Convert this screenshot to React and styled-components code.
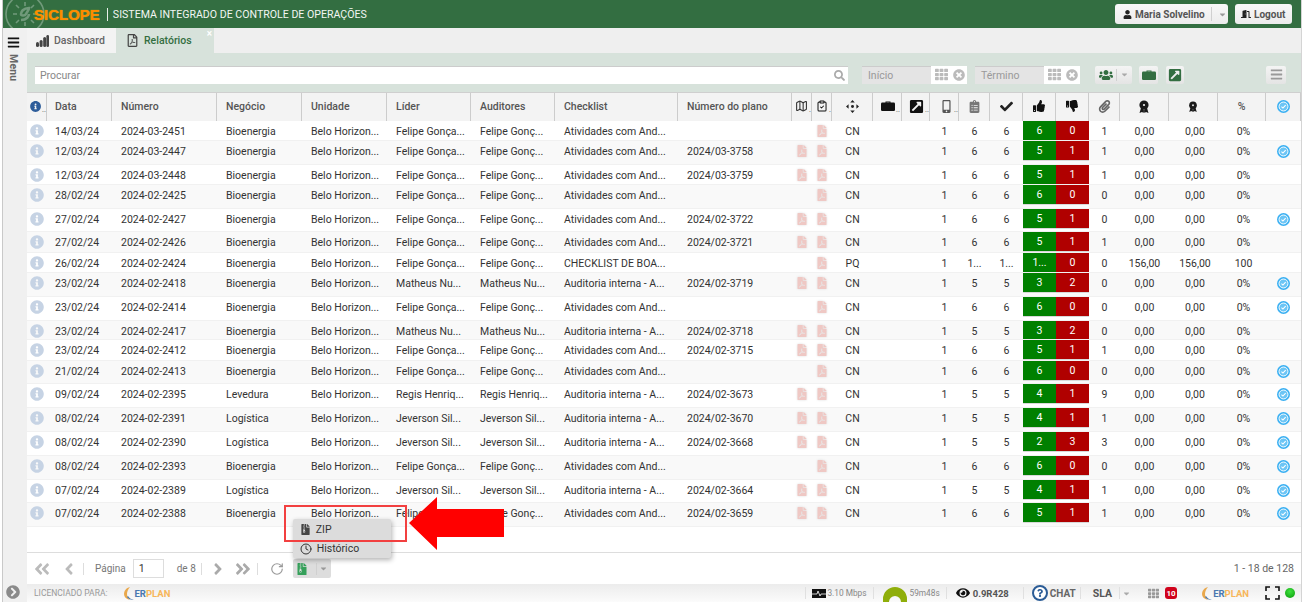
import React from "react";
import styled, { createGlobalStyle } from "styled-components";
import {
  FaThumbsUp, FaThumbsDown, FaCheck, FaUser, FaInfoCircle, FaFilePdf, FaRegFilePdf,
  FaUsers, FaEye, FaAngleDoubleLeft, FaAngleDoubleRight, FaAngleLeft, FaAngleRight,
  FaSearch, FaTh, FaTimesCircle, FaBars, FaExternalLinkSquareAlt, FaPaperclip, FaClipboardList,
  FaMobileAlt, FaFileArchive, FaChevronCircleRight, FaCaretDown, FaQuestion, FaDoorOpen,
} from "react-icons/fa";
import { Map as MapIcon, ClipboardCheck, RotateCw, Clock } from "lucide-react";

const Global = createGlobalStyle`
  html, body { margin: 0; padding: 0; background: #fff; overflow: hidden; }
  * { box-sizing: border-box; }
  body { font-family: Roboto, "Liberation Sans", sans-serif; }
`;

const COLS = "20px 65px 105px 85px 85px 84px 84px 123px 114px 20px 20px 41px 29px 28px 29px 31px 33px 33px 33px 31px 49px 49px 48px 1fr";

const Page = styled.div`position: relative; width: 1305px; height: 607px; overflow: hidden;`;
const Frame = styled.div`
  width: 1300px; height: 602px; margin-left: 2px; display: flex; flex-direction: column;
  border-left: 1px solid #c9c9c9; border-right: 1px solid #d4d4d4;
`;
const Header = styled.header`
  position: relative; height: 28px; flex: none; background: #336e41; display: flex; align-items: center;
  padding: 0 9px 0 31px; color: #fff; overflow: hidden;
`;
const LogoRing = styled.svg`position: absolute; left: 0; top: -8px; width: 44px; height: 44px;`;
const Brand = styled.span`
  font: bold 15px "Liberation Sans", sans-serif; color: #ff8a00; text-shadow: 0 0 1px #e8c400; position: relative;
`;
const BrandSep = styled.span`width: 1px; height: 13px; background: #e8efe9; margin: 0 5px 0 7px;`;
const Title = styled.span`font-size: 10.6px; color: #f2f6f3; flex: 1; white-space: nowrap;`;
const HeadBtn = styled.div`
  height: 20px; width: ${p => p.$w}px; flex: none; margin-left: ${p => p.$ml || 0}px; background: linear-gradient(#f8f8f8, #ececec);
  border-radius: 3px; display: flex; align-items: center; padding-left: ${p => p.$pl}px; color: #555; font-weight: 700; font-size: 10px; gap: 3px;
  white-space: nowrap;
`;
const BtnSep = styled.span`
  width: 1px; height: ${p => p.$h || 14}px; background: #d0d0d0; flex: none;
  margin-left: ${p => p.$l ?? 3}px; margin-right: ${p => p.$r ?? 3}px;
`;

const Body = styled.div`flex: 1; display: flex; min-height: 0;`;
const Sidebar = styled.aside`
  width: 24px; flex: none; background: #f0f0f0; display: flex; flex-direction: column; align-items: center;
  padding: 8px 4px 3px 0; color: #111;
`;
const MenuLabel = styled.div`
  writing-mode: vertical-rl; font-size: 10.5px; font-weight: 700; color: #666; margin-top: 5px; flex: 1; letter-spacing: .2px;
`;
const Main = styled.main`flex: 1; min-width: 0; display: flex; flex-direction: column;`;

const Tabs = styled.nav`height: 25px; flex: none; background: #efefef; display: flex;`;
const Tab = styled.div`
  position: relative; width: ${p => p.$w}px; display: flex; align-items: center; gap: 5px; padding-left: ${p => p.$pl}px;
  font-size: 10.5px; font-weight: 500; color: ${p => (p.$active ? "#336e41" : "#666")};
  background: ${p => (p.$active ? "#d7e2db" : "#f3f3f3")};
`;
const TabClose = styled.span`position: absolute; right: 2px; top: 0; color: #fff; font-size: 10px; line-height: 12px;`;
const BarsIcon = styled.svg`width: 13px; height: 12px; flex: none;`;

const Toolbar = styled.div`
  height: 40px; flex: none; background: #d7e2db; display: flex; align-items: center; padding: 4px 0 0 8px;
  border-bottom: 1px solid #cfcfcf;
`;
const Search = styled.div`
  width: 813px; height: 18px; background: #fff; border-top: 1px solid #ccc; display: flex; align-items: center;
  padding: 0 3px 0 5px; color: #888; font-size: 10.5px; justify-content: space-between;
`;
const DateField = styled.div`
  width: ${p => p.$w}px; height: 18px; margin-left: ${p => p.$ml}px; display: flex; background: #fff;
  color: #999; font-size: 10.5px;
`;
const DateLabel = styled.div`
  width: 69px; background: #e4e4e4; border-top: 1px solid #ccc; padding-left: 6px; display: flex; align-items: center;
`;
const DateIcons = styled.div`flex: 1; display: flex; align-items: center; justify-content: space-between; padding: 0 2px 0 4px; color: #bbb;`;
const ToolBtn = styled.div`
  width: ${p => p.$w}px; height: 18px; margin-left: ${p => p.$ml}px; background: linear-gradient(#f4f4f4, #e4e4e4);
  display: flex; align-items: center; justify-content: center; color: ${p => p.$c || "#336e41"}; border-radius: 2px;
`;

const Grid = styled.section`flex: 1; min-height: 0; background: #fff; overflow: hidden;`;
const HeadRow = styled.div`display: grid; grid-template-columns: ${COLS}; height: 28px; background: #f3f3f3;`;
const HeadCell = styled.div`
  display: flex; align-items: center; justify-content: ${p => (p.$text ? "flex-start" : "center")};
  padding-left: ${p => (p.$text ? p.$pl ?? 9 : 0)}px; padding-bottom: 2px; border-right: 1px solid #ccc;
  font-size: 10.5px; font-weight: 500; color: ${p => p.$c || "#555"}; white-space: nowrap; overflow: hidden;
`;
const Dots = styled.span`font-size: 7px; color: #666; align-self: flex-end; margin-bottom: 5px; margin-left: 1px;`;
const Row = styled.div`
  display: grid; grid-template-columns: ${COLS}; align-items: start; height: ${p => p.$h}px;
  background: ${p => (p.$alt ? "#f9f9f9" : "#fff")}; border-bottom: 1px solid #f1f1f1; overflow: hidden;
`;
const Cell = styled.div`
  height: 20px; display: flex; align-items: center; font-size: 10.5px; color: #333; white-space: nowrap; overflow: hidden;
  justify-content: ${p => (p.$center ? "center" : "flex-start")}; padding-left: ${p => p.$pl ?? (p.$center ? 0 : 9)}px;
`;
const Pill = styled.div`
  height: 20px; display: flex; align-items: center; justify-content: center; font-size: 10.5px; color: #fff;
  background: ${p => (p.$red ? "#b00000" : "#008000")}; border-bottom: 1px solid #d8d8d8;
`;
const PdfMark = styled(FaFilePdf)`color: #efc8c4; font-size: 12px; filter: drop-shadow(0 0 1px #ddd);`;

const Pager = styled.div`
  height: 32px; flex: none; border-top: 1px solid #ddd; background: #fff; display: flex; align-items: center;
  padding: 0 7px 0 6px; font-size: 10px; color: #777;
`;
const PageIcon = styled.span`display: flex; color: ${p => p.$c || "#bbb"}; margin-left: ${p => p.$ml || 0}px; font-size: ${p => p.$s || 18}px;`;
const PagerSep = styled.span`width: 1px; height: 12px; background: #ddd; margin-left: ${p => p.$ml}px;`;
const PageLabel = styled.span`margin-left: ${p => p.$ml}px;`;
const PageInput = styled.div`
  width: 31px; height: 19px; margin-left: 7px; border: 1px solid #ddd; background: #fff; font-size: 10.5px; color: #333;
  padding-left: 5px; display: flex; align-items: center;
`;
const ExportBtn = styled.div`
  position: relative; width: 38px; height: 19px; margin-left: 9px; background: #ddd; border-radius: 2px; display: flex;
  align-items: center; padding-left: 3px; color: #35a05a;
`;
const ExportMenu = styled.div`
  position: absolute; left: 0; bottom: calc(100% + 1px); width: 98px; height: 39px; background: #dcdcdc; border-radius: 2px;
  box-shadow: 1px 2px 5px rgba(0, 0, 0, .3); display: flex; flex-direction: column; padding-top: 1px;
`;
const MenuItem = styled.div`
  height: 19px; display: flex; align-items: center; gap: 5px; padding-left: 7px; font-size: 10.5px; color: #333;
`;
const PagerCount = styled.span`margin-left: auto; font-size: 10.5px; color: #666;`;

const Status = styled.footer`
  height: 18px; flex: none; background: linear-gradient(#ececec, #fbfbfb); display: flex; align-items: center; padding: 0 6px 0 7px;
  overflow: hidden; color: #555;
`;
const StatusRight = styled.div`margin-left: auto; display: flex; align-items: center; height: 100%;`;
const Licensed = styled.span`font-size: 8.5px; color: #999; white-space: nowrap;`;
const ErpLogo = styled.span`
  display: flex; align-items: center; font: bold 9.5px Roboto, sans-serif; color: #f7b65a; margin-left: ${p => p.$ml}px;
`;
const ErpBlue = styled.span`color: #4a78b0;`;
const Crescent = styled.svg`width: 12px; height: 15px;`;
const StatSep = styled.span`width: 1px; height: 12px; background: #e0e0e0; margin-left: ${p => p.$ml}px;`;
const StatText = styled.span`
  margin-left: ${p => p.$ml}px; font-size: ${p => p.$s || 8.3}px; font-weight: ${p => (p.$b ? 700 : 400)}; color: ${p => p.$c || "#888"}; white-space: nowrap;
`;
const StatIcon = styled.span`display: flex; margin-left: ${p => p.$ml}px; color: ${p => p.$c || "#111"}; font-size: ${p => p.$s || 12}px;`;
const Gauge = styled.svg`width: 24px; height: 15px; margin-left: 9px; align-self: flex-end;`;
const QCircle = styled.span`
  width: 16px; height: 16px; border-radius: 50%; border: 2px solid #2b5c96; margin-left: 8px; color: #2b5c96; font-size: 8px;
  display: flex; align-items: center; justify-content: center; background: #fff; flex: none;
`;
const Badge = styled.span`
  margin-left: 6px; width: 12px; height: 12px; border-radius: 3px; background: #d0021b; color: #fff; font-size: 8px; font-weight: 700;
  display: flex; align-items: center; justify-content: center;
`;
const Dot = styled.span`
  width: 10px; height: 10px; border-radius: 50%; margin-left: 5px; background: radial-gradient(circle at 50% 35%, #3ee23e, #0a9a0a);
`;
const Corners = styled.svg`width: 15px; height: 14px; margin-left: 16px;`;

const RedBox = styled.div`
  position: absolute; left: 284px; top: 505px; width: 123px; height: 37px; border: 2px solid #f24040; z-index: 5;
`;
const RedArrow = styled.svg`position: absolute; left: 405px; top: 494px; width: 102px; height: 60px; z-index: 6;`;

const Ring = () => (
  <LogoRing viewBox="0 0 44 44" fill="none" stroke="#fff" strokeOpacity=".3" strokeWidth="1.6">
    <circle cx="22" cy="22" r="19" />
    <path d="M22 10v4M22 30v4M10 22h4M30 22h4M13 13l3 3M28 28l3 3M31 13l-3 3M16 28l-3 3" />
    <path d="M26 16c-6 0-8 4-8 6s4 2 5 0 3-4 3-6zM18 28c6 0 8-4 8-6" strokeWidth="2.6" />
  </LogoRing>
);
const CheckBadge = () => (
  <svg width="13" height="13" viewBox="0 0 14 14">
    <circle cx="7" cy="7" r="7" fill="#3bb0f2" />
    <circle cx="7" cy="7" r="4.8" fill="#6cc5f5" stroke="#fff" strokeWidth="1" />
    <path d="M4.8 7.2l1.6 1.5L9.3 5.6" fill="none" stroke="#fff" strokeWidth="1.2" />
  </svg>
);
const Medal = ({ size }) => (
  <svg width={size} height={size + 1} viewBox="0 0 12 13" fill="#1a1a1a">
    <path d="M3 8L1.5 13l2.5-1 1.5 1L6.5 9zM9 8l1.5 5-2.5-1-1.5 1L5.5 9z" />
    <circle cx="6" cy="5" r="4.6" />
    <circle cx="6" cy="5" r="1.1" fill="#f3f3f3" />
  </svg>
);
const MoveMark = () => (
  <svg width="13" height="13" viewBox="0 0 15 15" fill="#222">
    <path d="M7.5 0l2.6 3H4.9zM7.5 15l2.6-3H4.9zM0 7.5l3-2.6v5.2zM15 7.5l-3-2.6v5.2z" />
    <circle cx="7.5" cy="7.5" r="1.7" />
  </svg>
);
const CaseMark = ({ w = 14 }) => (
  <svg width={w} height={Math.round(w * 0.72)} viewBox="0 0 14 10" fill="currentColor">
    <rect x="0" y="1.6" width="14" height="8.4" rx="1.2" />
    <path d="M4.5 2V.6h5V2h-1V1.4h-3V2z" />
  </svg>
);
const ErpCrescent = () => (
  <Crescent viewBox="0 0 12 15">
    <path d="M7 1C3 2 1 5 1 8c0 3 2 5 6 6-2-2-3-4-3-6s1-5 3-7z" fill="#e9a84c" />
    <path d="M4 11c1 2 4 3 7 3-3-1-5-2-6-4z" fill="#4a78b0" />
  </Crescent>
);
const Erp = ({ ml }) => (
  <ErpLogo $ml={ml}><ErpCrescent /><ErpBlue>ER</ErpBlue>PLAN</ErpLogo>
);

const F = "Felipe Gonça...", FA = "Felipe Gonç...", M = "Matheus Nu...", J = "Jeverson Sil...", RH = "Regis Henriq...";
const AT = "Atividades com And...", AI = "Auditoria interna - A...";
const rows = [
  [20, "14/03/24", "2024-03-2451", "Bioenergia", F, FA, AT, "", "CN", 6, 6, 0, 1, 0],
  [24, "12/03/24", "2024-03-2447", "Bioenergia", F, FA, AT, "2024/03-3758", "CN", 6, 5, 1, 1, 1],
  [20, "12/03/24", "2024-03-2448", "Bioenergia", F, FA, AT, "2024/03-3759", "CN", 6, 5, 1, 1, 0],
  [24, "28/02/24", "2024-02-2425", "Bioenergia", F, FA, AT, "", "CN", 6, 6, 0, 0, 0],
  [23, "27/02/24", "2024-02-2427", "Bioenergia", F, FA, AT, "2024/02-3722", "CN", 6, 5, 1, 0, 1],
  [21, "27/02/24", "2024-02-2426", "Bioenergia", F, FA, AT, "2024/02-3721", "CN", 6, 5, 1, 1, 0],
  [20, "26/02/24", "2024-02-2424", "Bioenergia", F, FA, "CHECKLIST DE BOA...", "", "PQ", "1...", "1...", 0, 0, 0, true],
  [24, "23/02/24", "2024-02-2418", "Bioenergia", M, "Matheus Nu...", AI, "2024/02-3719", "CN", 5, 3, 2, 0, 1],
  [24, "23/02/24", "2024-02-2414", "Bioenergia", F, FA, AT, "", "CN", 6, 6, 0, 0, 1],
  [19, "23/02/24", "2024-02-2417", "Bioenergia", M, "Matheus Nu...", AI, "2024/02-3718", "CN", 5, 3, 2, 0, 0],
  [21, "23/02/24", "2024-02-2412", "Bioenergia", F, FA, AT, "2024/02-3715", "CN", 6, 5, 1, 1, 0],
  [23, "21/02/24", "2024-02-2413", "Bioenergia", F, FA, AT, "", "CN", 6, 6, 0, 0, 1],
  [24, "09/02/24", "2024-02-2395", "Levedura", RH, RH, AI, "2024/02-3673", "CN", 5, 4, 1, 9, 1],
  [24, "08/02/24", "2024-02-2391", "Logística", J, J, AI, "2024/02-3670", "CN", 5, 4, 1, 1, 1],
  [24, "08/02/24", "2024-02-2390", "Logística", J, J, AI, "2024/02-3668", "CN", 5, 2, 3, 3, 1],
  [24, "08/02/24", "2024-02-2393", "Bioenergia", F, FA, AT, "", "CN", 6, 6, 0, 0, 1],
  [23, "07/02/24", "2024-02-2389", "Logística", J, J, AI, "2024/02-3664", "CN", 5, 4, 1, 1, 1],
  [24, "07/02/24", "2024-02-2388", "Bioenergia", F, FA, AT, "2024/02-3659", "CN", 6, 5, 1, 1, 1],
];

const TextHead = ({ children, pl, c }) => <HeadCell $text $pl={pl} $c={c}>{children}</HeadCell>;

export default function App() {
  return (
    <Page>
      <Global />
      <Frame>
        <Header>
          <Ring />
          <Brand>SICLOPE</Brand>
          <BrandSep />
          <Title>SISTEMA INTEGRADO DE CONTROLE DE OPERAÇÕES</Title>
          <HeadBtn $w={113} $pl={8}>
            <FaUser size={9} color="#222" />
            <span>Maria Solvelino</span>
            <BtnSep />
            <FaCaretDown size={9} color="#999" />
          </HeadBtn>
          <HeadBtn $w={57} $ml={7} $pl={6}>
            <FaDoorOpen size={10} color="#222" />
            <span>Logout</span>
          </HeadBtn>
        </Header>
        <Body>
          <Sidebar>
            <FaBars size={13} />
            <MenuLabel>Menu</MenuLabel>
            <FaChevronCircleRight size={14} color="#8a8a8a" />
          </Sidebar>
          <Main>
            <Tabs>
              <Tab $w={89} $pl={9}>
                <BarsIcon viewBox="0 0 13 12" fill="#444">
                  <rect x="0" y="7" width="3" height="5" rx="1.5" />
                  <rect x="3.6" y="5" width="3" height="7" rx="1.5" />
                  <rect x="7.2" y="2" width="3" height="10" rx="1.5" />
                  <rect x="10.4" y="0" width="2.6" height="12" rx="1.3" />
                </BarsIcon>
                Dashboard
              </Tab>
              <Tab $w={98} $pl={10} $active>
                <FaRegFilePdf size={13} color="#444" />
                Relatórios
                <TabClose>×</TabClose>
              </Tab>
            </Tabs>
            <Toolbar>
              <Search>
                Procurar
                <FaSearch size={11} color="#aaa" />
              </Search>
              <DateField $w={105} $ml={14}>
                <DateLabel>Início</DateLabel>
                <DateIcons><FaTh size={13} /><FaTimesCircle size={12} /></DateIcons>
              </DateField>
              <DateField $w={105} $ml={8}>
                <DateLabel>Término</DateLabel>
                <DateIcons><FaTh size={13} /><FaTimesCircle size={12} /></DateIcons>
              </DateField>
              <ToolBtn $w={37} $ml={15}>
                <FaUsers size={14} />
                <BtnSep $h={12} />
                <FaCaretDown size={9} color="#aaa" />
              </ToolBtn>
              <ToolBtn $w={19} $ml={7}><CaseMark w={14} /></ToolBtn>
              <ToolBtn $w={18} $ml={8}><FaExternalLinkSquareAlt size={14} /></ToolBtn>
              <ToolBtn $w={20} $ml={82} $c="#999"><FaBars size={13} /></ToolBtn>
            </Toolbar>
            <Grid>
              <HeadRow>
                <TextHead pl={3}><FaInfoCircle size={15} color="#2e5d9a" /><Dots>..</Dots></TextHead>
                <TextHead pl={8}>Data</TextHead>
                <TextHead>Número</TextHead>
                <TextHead>Negócio</TextHead>
                <TextHead>Unidade</TextHead>
                <TextHead>Líder</TextHead>
                <TextHead>Auditores</TextHead>
                <TextHead>Checklist</TextHead>
                <TextHead>Número do plano</TextHead>
                <TextHead pl={3}><MapIcon size={14} color="#333" /><Dots>.</Dots></TextHead>
                <TextHead pl={4}><ClipboardCheck size={14} color="#111" /><Dots>.</Dots></TextHead>
                <HeadCell><MoveMark /></HeadCell>
                <TextHead pl={8} c="#111"><CaseMark w={14} /><Dots>..</Dots></TextHead>
                <TextHead pl={7} c="#111"><FaExternalLinkSquareAlt size={15} /><Dots>..</Dots></TextHead>
                <TextHead pl={10} c="#555"><FaMobileAlt size={13} /><Dots>..</Dots></TextHead>
                <HeadCell $c="#777"><FaClipboardList size={13} /></HeadCell>
                <HeadCell $c="#222"><FaCheck size={13} /></HeadCell>
                <HeadCell $c="#111"><FaThumbsUp size={12} /></HeadCell>
                <HeadCell $c="#111"><FaThumbsDown size={12} /></HeadCell>
                <HeadCell $c="#666"><FaPaperclip size={13} /></HeadCell>
                <HeadCell><Medal size={12} /></HeadCell>
                <HeadCell><Medal size={10} /></HeadCell>
                <HeadCell>%</HeadCell>
                <HeadCell><CheckBadge /></HeadCell>
              </HeadRow>
              {rows.map((r, i) => {
                const [h, data, num, neg, lider, aud, chk, plano, tipo, total, g, v, clip, done, special] = r;
                return (
                  <Row key={num} $h={h} $alt={i % 2 === 1}>
                    <Cell $center><FaInfoCircle size={14} color="#c6d3e4" /></Cell>
                    <Cell $pl={8}>{data}</Cell>
                    <Cell>{num}</Cell>
                    <Cell>{neg}</Cell>
                    <Cell>Belo Horizon...</Cell>
                    <Cell>{lider}</Cell>
                    <Cell>{aud}</Cell>
                    <Cell>{chk}</Cell>
                    <Cell>{plano}</Cell>
                    <Cell $center>{plano && <PdfMark />}</Cell>
                    <Cell $center><PdfMark /></Cell>
                    <Cell $center>{tipo}</Cell>
                    <Cell />
                    <Cell />
                    <Cell $center>1</Cell>
                    <Cell $center>{total}</Cell>
                    <Cell $center>{total}</Cell>
                    <Pill>{special ? "1..." : g}</Pill>
                    <Pill $red>{v}</Pill>
                    <Cell $center>{clip}</Cell>
                    <Cell $center>{special ? "156,00" : "0,00"}</Cell>
                    <Cell $center $pl={3}>{special ? "156,00" : "0,00"}</Cell>
                    <Cell $center $pl={3}>{special ? "100" : "0%"}</Cell>
                    <Cell $center>{done ? <CheckBadge /> : null}</Cell>
                  </Row>
                );
              })}
            </Grid>
            <Pager>
              <PageIcon><FaAngleDoubleLeft /></PageIcon>
              <PageIcon $ml={9}><FaAngleLeft /></PageIcon>
              <PagerSep $ml={5} />
              <PageLabel $ml={11}>Página</PageLabel>
              <PageInput>1</PageInput>
              <PageLabel $ml={13}>de 8</PageLabel>
              <PagerSep $ml={5} />
              <PageIcon $ml={7} $c="#aaa"><FaAngleRight /></PageIcon>
              <PageIcon $ml={7} $c="#aaa"><FaAngleDoubleRight /></PageIcon>
              <PagerSep $ml={5} />
              <PageIcon $ml={12} $s={14} $c="#999"><RotateCw size={14} /></PageIcon>
              <ExportBtn>
                <FaFileArchive size={12} />
                <BtnSep $l={8} $r={2} $h={12} />
                <FaCaretDown size={9} color="#999" />
                <ExportMenu>
                  <MenuItem><FaFileArchive size={11} color="#444" />ZIP</MenuItem>
                  <MenuItem><Clock size={12} color="#333" />Histórico</MenuItem>
                </ExportMenu>
              </ExportBtn>
              <PagerCount>1 - 18 de 128</PagerCount>
            </Pager>
            <Status>
              <Licensed>LICENCIADO PARA:</Licensed>
              <Erp ml={15} />
              <StatusRight>
                <StatSep $ml={0} />
                <StatIcon $ml={6} $s={12}>
                  <svg width="14" height="9" viewBox="0 0 14 9"><rect width="14" height="9" fill="#111" /><path d="M0 5h5l1-3 2 5 1-2h5" stroke="#fff" fill="none" strokeWidth=".8" /></svg>
                </StatIcon>
                <StatText $ml={1}>3.10 Mbps</StatText>
                <StatSep $ml={7} />
                <Gauge viewBox="0 0 24 15"><path d="M0 15V12A12 12 0 0 1 24 12V15H18A6 6 0 0 0 6 15Z" fill="#8fae0a" /></Gauge>
                <StatText $ml={2}>59m48s</StatText>
                <StatSep $ml={6} />
                <StatIcon $ml={9} $s={14}><FaEye /></StatIcon>
                <StatText $ml={3} $s={9.5} $b $c="#555">0.9R428</StatText>
                <StatSep $ml={14} />
                <QCircle><FaQuestion /></QCircle>
                <StatText $ml={2} $s={10} $b $c="#666">CHAT</StatText>
                <StatSep $ml={4} />
                <StatText $ml={12} $s={10.5} $b $c="#555">SLA</StatText>
                <StatSep $ml={7} />
                <StatIcon $ml={2} $s={9} $c="#aaa"><FaCaretDown /></StatIcon>
                <StatIcon $ml={17} $s={11} $c="#999"><FaTh /></StatIcon>
                <Badge>10</Badge>
                <Erp ml={24} />
                <Corners viewBox="0 0 15 14" fill="none" stroke="#111" strokeWidth="1.6"><path d="M1 5V1h4M10 1h4v4M14 9v4h-4M5 13H1V9" /></Corners>
                <Dot />
              </StatusRight>
            </Status>
          </Main>
        </Body>
      </Frame>
      <RedBox />
      <RedArrow viewBox="0 0 102 60">
        <polygon points="4,29 32,3 32,15 99,15 99,43 32,43 32,56" fill="#ff0000" />
      </RedArrow>
    </Page>
  );
}
